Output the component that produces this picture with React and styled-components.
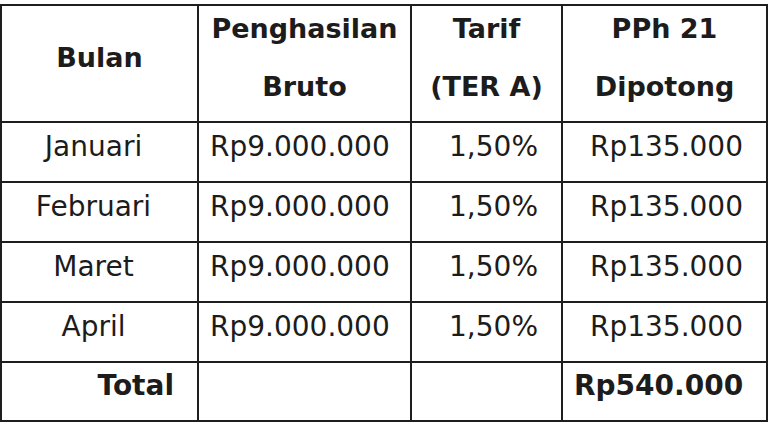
import React from 'react';
import styled, { createGlobalStyle } from 'styled-components';

const GlobalStyle = createGlobalStyle`
  html, body {
    margin: 0;
    padding: 0;
    background: #ffffff;
  }
  body {
    font-family: 'DejaVu Sans', 'Liberation Sans', sans-serif;
    color: #1c1c1c;
  }
`;

const rows = [
  { month: 'Januari', gross: 'Rp9.000.000', rate: '1,50%', tax: 'Rp135.000' },
  { month: 'Februari', gross: 'Rp9.000.000', rate: '1,50%', tax: 'Rp135.000' },
  { month: 'Maret', gross: 'Rp9.000.000', rate: '1,50%', tax: 'Rp135.000' },
  { month: 'April', gross: 'Rp9.000.000', rate: '1,50%', tax: 'Rp135.000' },
];

const headers = [['Bulan'], ['Penghasilan', 'Bruto'], ['Tarif', '(TER A)'], ['PPh 21', 'Dipotong']];

const App = () => {
  return (
    <Page>
      <GlobalStyle />
      <Table>
        <colgroup>
          <col style={{ width: 197 }} />
          <col style={{ width: 213 }} />
          <col style={{ width: 151 }} />
          <col style={{ width: 205 }} />
        </colgroup>
        <thead>
          <tr>
            {headers.map((lines, i) => (
              <HeadCell key={i}>
                <Stack>
                  {lines.map((l) => (
                    <span key={l}>{l}</span>
                  ))}
                </Stack>
              </HeadCell>
            ))}
          </tr>
        </thead>
        <tbody>
          {rows.map((r) => (
            <Row key={r.month}>
              <Cell align="center">{r.month}</Cell>
              <Cell align="left">{r.gross}</Cell>
              <Cell align="right">{r.rate}</Cell>
              <Cell align="right">{r.tax}</Cell>
            </Row>
          ))}
          <Row last>
            <Cell align="right" bold>Total</Cell>
            <Cell />
            <Cell />
            <Cell align="right" bold>Rp540.000</Cell>
          </Row>
        </tbody>
      </Table>
    </Page>
  );
};

const Page = styled.div`
  width: 768px;
  height: 424px;
  padding-top: 4px;
  box-sizing: border-box;
  overflow: hidden;
`;

const Table = styled.table`
  width: 767px;
  table-layout: fixed;
  border-collapse: collapse;
  border: 2px solid #1e1e1e;
`;

const HeadCell = styled.th`
  border: 2px solid #1e1e1e;
  padding: 0 0 11px 0;
  font-size: 27px;
  font-weight: 700;
  text-align: center;
  vertical-align: top;
`;

const Stack = styled.div`
  height: 104px;
  display: flex;
  flex-direction: column;
  justify-content: center;
  align-items: center;
  line-height: 58px;
  white-space: nowrap;
`;

const Row = styled.tr`
  height: ${(p) => (p.last ? 59 : 60)}px;
`;

const Cell = styled.td`
  border: 2px solid #1e1e1e;
  padding: 0 23px 12px 11px;
  font-size: 28px;
  font-weight: ${(p) => (p.bold ? 700 : 400)};
  text-align: ${(p) => p.align || 'left'};
  vertical-align: middle;
  white-space: nowrap;
  line-height: 33px;
`;

export default App;
